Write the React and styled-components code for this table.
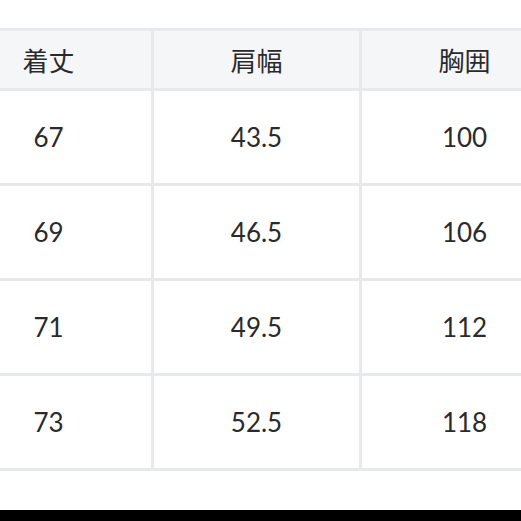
import React from "react";
import styled, { createGlobalStyle } from "styled-components";

const GlobalStyle = createGlobalStyle`
    html, body {
        margin: 0;
        padding: 0;
        background: #ffffff;
        overflow: hidden;
    }
`;

const Page = styled.div`
    width: 521px;
    height: 521px;
    display: flex;
    flex-direction: column;
    overflow: hidden;
    background: #ffffff;
    font-family: Lato, "Noto Sans CJK JP", sans-serif;
`;

const Grid = styled.div`
    margin-top: 28px;
    margin-left: -57px;
    width: max-content;
    display: grid;
    grid-template-columns: repeat(3, 205px);
    grid-auto-rows: 92px;
    grid-template-rows: 57px;
    gap: 3px;
    padding: 3px;
    background: #e8e9eb;
`;

const Cell = styled.div`
    display: flex;
    align-items: center;
    justify-content: center;
    background: ${(p) => (p.$head ? "#f4f6f8" : "#ffffff")};
    color: #2a2a2a;
    font-size: ${(p) => (p.$head ? "26px" : "26px")};
    font-family: ${(p) => (p.$head ? '"Noto Sans CJK JP", sans-serif' : 'Lato, sans-serif')};
`;

const Spacer = styled.div`
    flex: 1;
`;

const BottomBar = styled.div`
    height: 11px;
    background: #000000;
`;

const heads = ["着丈", "肩幅", "胸囲"];
const rows = [
    ["67", "43.5", "100"],
    ["69", "46.5", "106"],
    ["71", "49.5", "112"],
    ["73", "52.5", "118"],
];

export default function App() {
    return (
        <Page>
            <GlobalStyle />
            <Grid>
                {heads.map((h) => (
                    <Cell key={h} $head>{h}</Cell>
                ))}
                {rows.map((r, i) =>
                    r.map((v, j) => <Cell key={i + "-" + j}>{v}</Cell>)
                )}
            </Grid>
            <Spacer />
            <BottomBar />
        </Page>
    );
}
